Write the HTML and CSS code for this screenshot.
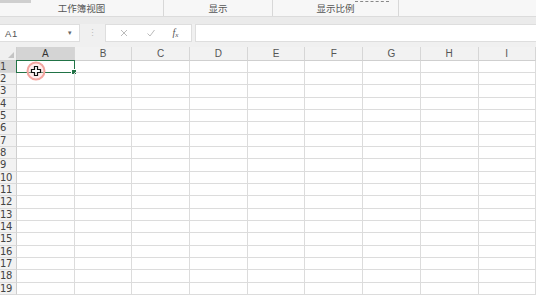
FILE: index.html
```html
<!DOCTYPE html>
<html lang="zh">
<head>
<meta charset="utf-8">
<link rel="stylesheet" href="styles.css">
</head>
<body>
<div class="app">
  <div class="ribbon">
    <div class="group g1"><span class="stub"></span><span class="label">工作簿视图</span></div>
    <div class="group g2"><span class="label">显示</span></div>
    <div class="group g3"><span class="frag"></span><span class="label">显示比例</span></div>
    <div class="group g4"></div>
  </div>
  <div class="strip"></div>
  <div class="fbar">
    <div class="namebox"><span>A1</span><span class="dd">▾</span></div>
    <div class="dots">⋮</div>
    <div class="btns">
      <svg class="ico" width="10" height="10" viewBox="0 0 10 10"><path d="M2 2L8 8M8 2L2 8" stroke="#bbb" stroke-width="1"/></svg>
      <svg class="ico" width="10" height="10" viewBox="0 0 10 10"><path d="M1.5 5.5L4 8L8.5 2" stroke="#bbb" stroke-width="1" fill="none"/></svg>
      <span class="fx">f<sub>x</sub></span>
    </div>
    <div class="input"></div>
  </div>
  <div class="gap"></div>
  <div class="sheet" id="sheet"></div>
  <div class="cursor">
    <svg width="22" height="22" viewBox="0 0 22 22">
      <circle cx="11" cy="11" r="8.5" fill="rgba(255,200,200,0.35)" stroke="#f3a5a0" stroke-width="2"/>
      <path d="M9.5 6.5h3v3h3v3h-3v3h-3v-3h-3v-3h3z" fill="#fff" stroke="#111" stroke-width="1.2"/>
    </svg>
  </div>
</div>
<script src="app.js"></script>
</body>
</html>
```
FILE: app.js
```js
const sheet = document.getElementById('sheet');
const cols = ['A','B','C','D','E','F','G','H','I'];
let html = '<div class="corner"><span class="tri"></span></div>';
cols.forEach((c,i)=>{ html += `<div class="ch${i===0?' sel':''}">${c}</div>`; });
for (let r=1;r<=19;r++){
  html += `<div class="rh${r===1?' sel':''}">${r}</div>`;
  cols.forEach((c,i)=>{ html += `<div class="cell${r===1&&i===0?' active':''}"></div>`; });
}
sheet.innerHTML = html;
```
FILE: styles.css
```css
* { box-sizing: border-box; }
html, body { margin: 0; padding: 0; }
body { width: 536px; height: 295px; overflow: hidden; background: #fff; font-family: "Liberation Sans", Arial, sans-serif; color: #444; }
.app { position: relative; width: 536px; height: 295px; }
.ribbon { height: 17px; background: #f7f7f7; display: flex; border-bottom: 1px solid #dcdcdc; }
.group { position: relative; height: 100%; border-right: 1px solid #d8d8d8; display: flex; align-items: flex-end; justify-content: center; }
.g1 { width: 164px; }
.g2 { width: 109px; }
.g3 { width: 126px; }
.g4 { flex: 1; border-right: none; }
.label { font-family: "Noto Sans CJK SC", sans-serif; font-size: 9.5px; line-height: 12px; color: #555; padding-bottom: 2px; }
.stub { position: absolute; left: 0; top: 0; width: 31px; height: 3px; background: #cfcfcf; }
.frag { position: absolute; left: 82px; top: 0; width: 34px; height: 2px; border-bottom: 1px dashed #888; }
.strip { height: 7px; background: #ebebeb; }
.fbar { height: 18px; background: #f0f0f0; display: flex; align-items: stretch; }
.namebox { width: 80px; background: #fff; border: 1px solid #dedede; border-left: none; display: flex; align-items: center; justify-content: space-between; padding: 0 6px 0 5px; font-size: 9.5px; color: #555; letter-spacing: 0.6px; }
.dd { font-size: 7px; color: #666; }
.dots { width: 25px; display: flex; align-items: center; justify-content: center; color: #bbb; font-size: 9px; }
.btns { width: 87px; background: #fff; border: 1px solid #dedede; display: flex; align-items: center; justify-content: space-around; padding: 0 4px; }
.fx { font-family: "Liberation Serif", serif; font-style: italic; font-size: 10px; color: #555; }
.fx sub { font-size: 7px; vertical-align: -1px; }
.input { flex: 1; margin-left: 3px; background: #fff; border: 1px solid #dedede; border-right: none; }
.gap { height: 5px; background: #f0f0f0; }
.sheet { display: grid; grid-template-columns: 17px repeat(8, 57.7px) 1fr; grid-template-rows: 13.5px repeat(19, 12.35px); }
.corner { background: #f0f0f0; border-right: 1px solid #cfcfcf; border-bottom: 1px solid #cfcfcf; position: relative; }
.tri { position: absolute; right: 2px; bottom: 2px; width: 0; height: 0; border-left: 6px solid transparent; border-bottom: 6px solid #c4c4c4; }
.ch { background: #f2f2f2; border-right: 1px solid #d6d6d6; border-bottom: 1px solid #cfcfcf; font-size: 10px; line-height: 13px; text-align: center; color: #555; }
.ch.sel { background: #d4d4d4; border-bottom: 1px solid #217346; color: #333; }
.rh { background: #f2f2f2; border-right: 1px solid #cfcfcf; border-bottom: 1px solid #dadada; font-family: "DejaVu Sans", sans-serif; font-size: 10px; line-height: 12px; padding-left: 0; color: #444; letter-spacing: -0.3px; }
.rh.sel { background: #d4d4d4; border-right: 1px solid #217346; }
.cell { border-right: 1px solid #dcdcdc; border-bottom: 1px solid #dcdcdc; position: relative; }
.cell.active { border: 1.5px solid #217346; margin: -1px 0 0 -1px; }
.cell.active::after { content: ""; position: absolute; right: -3px; bottom: -3px; width: 4px; height: 4px; background: #217346; border: 1px solid #fff; }
.cursor { position: absolute; left: 25px; top: 60px; width: 22px; height: 22px; }
```
